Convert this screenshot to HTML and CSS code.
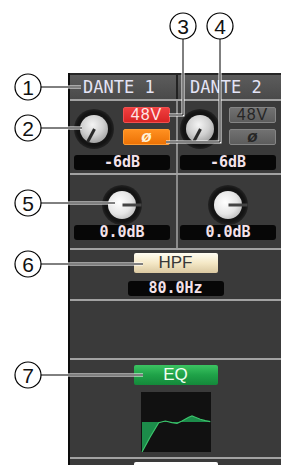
FILE: index.html
```html
<!DOCTYPE html>
<html lang="en">
<head>
    <meta charset="UTF-8">
    <meta name="viewport" content="width=device-width, initial-scale=1.0">
    <title>Input Channel Strip</title>
    <link rel="stylesheet" href="styles.css">
</head>
<body>
    <div class="panel">
        <div class="row head">
            <div class="cell">DANTE 1</div>
            <div class="cell">DANTE 2</div>
        </div>

        <div class="row gain">
            <div class="cell">
                <div class="gain-top">
                    <div class="knob knob-gain"></div>
                    <div class="btns">
                        <div class="btn btn-48v on">48V</div>
                        <div class="btn btn-phase on">ø</div>
                    </div>
                </div>
                <div class="display">-6dB</div>
            </div>
            <div class="cell">
                <div class="gain-top">
                    <div class="knob knob-gain"></div>
                    <div class="btns">
                        <div class="btn btn-48v">48V</div>
                        <div class="btn btn-phase">ø</div>
                    </div>
                </div>
                <div class="display">-6dB</div>
            </div>
        </div>

        <div class="row trim">
            <div class="cell">
                <div class="knob knob-pan"></div>
                <div class="display">0.0dB</div>
            </div>
            <div class="cell">
                <div class="knob knob-pan"></div>
                <div class="display">0.0dB</div>
            </div>
        </div>

        <div class="row hpf">
            <div class="btn-wide btn-hpf">HPF</div>
            <div class="display">80.0Hz</div>
        </div>

        <div class="row empty"></div>

        <div class="row eq">
            <div class="btn-wide btn-eq">EQ</div>
            <svg class="eq-graph" viewBox="0 0 70 60" width="70" height="60">
                <polygon class="eq-fill" points="1,30 1,60 9.3,44.7 17.7,30.7 24.3,29 31,30.7 36,31.3 41,29 47.7,25.3 51,24 54.3,25.3 59.3,27.3 64.3,28.7 69.3,29.7 69.3,30"/>
                <polyline class="eq-line" points="1,60 9.3,44.7 17.7,30.7 24.3,29 31,30.7 36,31.3 41,29 47.7,25.3 51,24 54.3,25.3 59.3,27.3 64.3,28.7 69.3,29.7"/>
            </svg>
        </div>

        <div class="next">
            <div class="btn-wide btn-white"></div>
        </div>
    </div>

    <!-- numbered callouts drawn over the strip -->
    <svg class="callouts" width="281" height="465" viewBox="0 0 281 465">
        <g class="lead-bg">
            <path d="M41 87H81"/>
            <path d="M41 128H82"/>
            <path d="M183 39V115H169"/>
            <path d="M220 39V142H166"/>
            <path d="M41 203H115"/>
            <path d="M41 264H143"/>
            <path d="M41 375H143"/>
        </g>
        <g class="lead">
            <path d="M41 87H81"/>
            <path d="M41 128H82"/>
            <path d="M183 39V115H169"/>
            <path d="M220 39V142H166"/>
            <path d="M41 203H115"/>
            <path d="M41 264H143"/>
            <path d="M41 375H143"/>
        </g>
        <g class="marks">
            <circle cx="28" cy="87" r="13"/><text x="28" y="94.5">1</text>
            <circle cx="28" cy="128" r="13"/><text x="28" y="135.5">2</text>
            <circle cx="183" cy="26" r="13"/><text x="183" y="33.5">3</text>
            <circle cx="220" cy="26" r="13"/><text x="220" y="33.5">4</text>
            <circle cx="28" cy="203" r="13"/><text x="28" y="210.5">5</text>
            <circle cx="28" cy="264" r="13"/><text x="28" y="271.5">6</text>
            <circle cx="28" cy="375" r="13"/><text x="28" y="382.5">7</text>
        </g>
    </svg>
</body>
</html>
```

FILE: styles.css
```css
html, body { margin: 0; background: #fff; overflow: hidden; }
body { width: 281px; height: 465px; position: relative; font-family: "Liberation Sans", Arial, sans-serif; }

.panel {
    margin: 73px 0 0 68px;
    width: 213px;
    height: 392px;
    box-sizing: border-box;
    background: #3a3a3a;
    border-left: 2px solid #0c0c0c;
    overflow: hidden;
}
.row { border-bottom: 2px solid #a2a2a2; }
.head, .gain, .trim { display: grid; grid-template-columns: 106px 1fr; }

/* channel name bar */
.head {
    height: 24px;
    border-top: 2px solid #262626;
    background: linear-gradient(#5c5c5c, #4a4a4a);
}
.head .cell {
    padding-left: 13px;
    font: 17px/24px "DejaVu Sans Mono", monospace;
    color: #e4e4f6;
    white-space: pre;
}
.head .cell + .cell { border-left: 2px solid #222; padding-left: 12px; }

/* gain + 48V + phase */
.gain .cell { padding: 6px 6px 3px 4px; }
.gain .cell + .cell, .trim .cell + .cell { border-left: 2px solid #8a8a8a; padding-left: 2px; padding-right: 5px; }
.gain-top { display: flex; justify-content: space-between; align-items: flex-start; }
.gain-top .knob { margin-top: 2px; }
.btns { display: flex; flex-direction: column; gap: 6px; width: 47px; }
.btn {
    height: 16px;
    box-sizing: border-box;
    border: 1px solid #858585;
    border-radius: 2px;
    background: linear-gradient(#717171, #5c5c5c);
    color: #262626;
    text-align: center;
}
.btn-48v { font: 16px/14px "Liberation Sans", Arial, sans-serif; letter-spacing: 1px; }
.btn-phase { font: italic bold 17px/14px "Liberation Sans", Arial, sans-serif; }
.btn-48v.on { background: linear-gradient(#f04040, #d82424); border-color: #f05050; color: #ffe6e6; }
.btn-phase.on { background: linear-gradient(#ff9020, #ec7206); border-color: #ff9a30; color: #fff2d8; }

.display {
    width: 96px;
    height: 15px;
    margin-top: 6px;
    border-radius: 3px;
    background: #070707;
    color: #f4e2ea;
    font: bold 15px/15px "DejaVu Sans Mono", monospace;
    text-align: center;
}

/* knobs */
.knob {
    position: relative;
    width: 40px;
    height: 40px;
    border-radius: 50%;
    background: radial-gradient(circle, #141414 60%, #2c2c2c 78%, #5a5a5a 96%, #3a3a3a 100%);
}
.knob::before {
    content: "";
    position: absolute;
    inset: 6px;
    border-radius: 50%;
}
.knob::after {
    content: "";
    position: absolute;
    left: 50%;
    top: 50%;
    width: 3px;
    margin-left: -1.5px;
    transform-origin: top center;
    background: #2a2a2a;
}
.knob-gain::before { background: radial-gradient(circle at 45% 35%, #f4f4f4, #d0d0d0 45%, #848484 100%); }
.knob-gain::after { height: 15px; transform: rotate(28deg); }
.knob-pan::before { background: radial-gradient(circle at 40% 40%, #ffffff, #e6e6e6 50%, #a2a2a2 100%); }
.knob-pan::after { height: 19px; background: #444; transform: rotate(-90deg); }

.trim .cell { display: flex; flex-direction: column; align-items: center; padding: 10px 6px 8px 4px; }
.trim .display { margin-top: 0; }

/* wide buttons across both channels */
.hpf, .eq, .next { display: flex; flex-direction: column; align-items: center; }
.hpf { padding: 3px 0 3px; }
.hpf .display { margin-top: 8px; }
.btn-wide {
    width: 84px;
    height: 20px;
    border-radius: 2px;
    font: 17px/20px "Liberation Sans", Arial, sans-serif;
    text-align: center;
}
.btn-hpf { background: linear-gradient(#fffdf2, #f4e8c6 50%, #dac8a0); color: #383838; }
.btn-eq { background: linear-gradient(#3cc462, #1fa248 50%, #14883a); color: #f0fff2; }
.btn-white { background: #fff; height: 12px; }

.empty { height: 57px; }
.eq { padding: 5px 0; }
.eq-graph { display: block; margin-top: 7px; background: #111; }
.eq-fill { fill: #1c8c4a; }
.eq-line { fill: none; stroke: #3cc46c; stroke-width: 1.2; }
.next { padding-top: 3px; }

/* callouts */
.callouts { position: absolute; left: 0; top: 0; pointer-events: none; }
.callouts path { fill: none; }
.lead-bg path { stroke: #fff; stroke-width: 3; }
.lead path { stroke: #000; stroke-width: 1; }
.marks circle { fill: #fff; stroke: #000; stroke-width: 1.2; }
.marks text { font: 21px "Liberation Sans", Arial, sans-serif; text-anchor: middle; fill: #111; }
```
